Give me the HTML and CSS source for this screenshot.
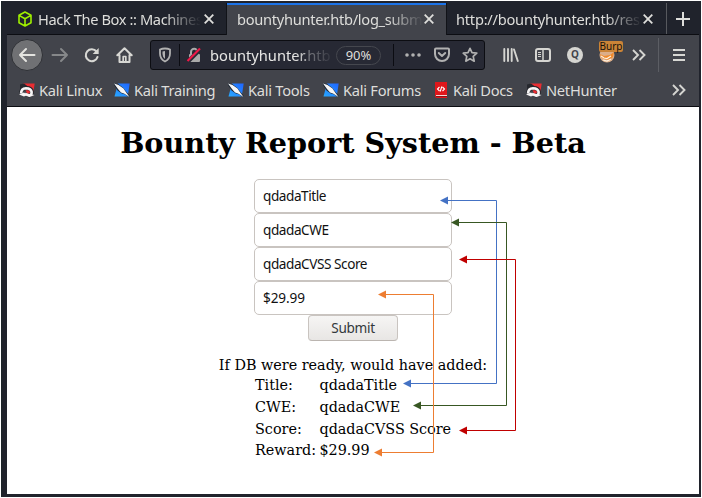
FILE: index.html
```html
<!DOCTYPE html>
<html lang="en">
<head>
<meta charset="utf-8">
<title>Bounty Report System - Beta</title>
<link rel="stylesheet" href="styles.css">
</head>
<body>
<svg class="defs" width="0" height="0">
  <defs>
    <linearGradient id="blue" x1="1" y1="0" x2="0" y2="1"><stop offset="0" stop-color="#1f65ff"/><stop offset="1" stop-color="#28a8ff"/></linearGradient>
    <symbol id="close" viewBox="0 0 12 12"><path d="M1.700 1.700l8.600 8.600M10.300 1.700l-8.600 8.600" fill="none" stroke="#dededb" stroke-width="1.800"/></symbol>
    <symbol id="more" viewBox="0 0 14 12"><path d="M1 1l5 5-5 5M7.500 1l5 5-5 5" fill="none" stroke="#d5d5d1" stroke-width="1.900"/></symbol>
    <symbol id="dragon" viewBox="0 0 16 16"><path d="M4 1.500h11.700l-2 12.500H9z" fill="#ea2d32"/><path d="M1 2.500l4-1 4 3-5 4-3-1z" fill="#26282e"/><path d="M2 10.500Q2.500 6.300 7.500 6q5 0 5.500 4 .2 3-4 3.700" fill="none" stroke="#26282e" stroke-width="4"/><path d="M2.200 11.500Q2 6.500 7 6.200q5 0 5.600 3.600.4 2.700-2.100 3.700L6 12" fill="none" stroke="#f7f5f5" stroke-width="2.600"/><path d="M0 12.500l5-2 3 2.500-3 1.500zM11 12l4.500 1-3.500 1.500H9z" fill="#f7f5f5"/></symbol>
    <symbol id="kali" viewBox="0 0 16 16"><path d="M4 1.500h11.700l-2 13H.5z" fill="url(#blue)"/><path d="M0 2l4 .5 5 4 2 2.500 4.500 5.500-5-3-2.500-.5L4 8z" fill="#1f2935" stroke="#1f2935" stroke-width="1.200"/><path d="M0 1.500l4.500 1.500L9.500 6.500l2 3 4 5.500-5.500-3.500-3-1L4 7z" fill="#f5f6f7"/></symbol>
  </defs>
</svg>
<div class="window">
  <div class="tabs">
    <div class="tab">
      <svg class="htb" width="16" height="16" viewBox="0 0 16 16" fill="none" stroke="#9fef00" stroke-width="1.600" stroke-linejoin="round"><path d="M8 1l6 3.300v7.400L8 15l-6-3.300V4.300zM2.500 4.600L8 7.700l5.500-3.100M8 7.700V15"/></svg>
      <span class="label first">Hack The Box :: Machines</span><svg class="x" width="12" height="12"><use href="#close"/></svg>
    </div>
    <div class="tab active"><span class="label">bountyhunter.htb/log_subm</span><svg class="x" width="12" height="12"><use href="#close"/></svg></div>
    <div class="tab"><span class="label">http://bountyhunter.htb/res</span><svg class="x" width="12" height="12"><use href="#close"/></svg></div>
    <div class="newtab"><svg width="16" height="16" viewBox="0 0 16 16"><path d="M8 1v14M1 8h14" stroke="#dededb" stroke-width="2"/></svg></div>
  </div>
  <div class="toolbar">
    <div class="cell back"><svg width="18" height="16" viewBox="0 0 18 16" fill="none" stroke="#e4e4e0" stroke-width="2" stroke-linecap="round" stroke-linejoin="round"><path d="M16.500 8H2M8 2L2 8l6 6"/></svg></div>
    <div class="cell fwd"><svg width="18" height="16" viewBox="0 0 18 16" fill="none" stroke="#86888a" stroke-width="2" stroke-linecap="round" stroke-linejoin="round"><path d="M1.500 8H16M10 2l6 6-6 6"/></svg></div>
    <div class="cell"><svg width="16" height="16" viewBox="0 0 16 16"><path d="M12.500 4.500A6 6 0 1 0 13.500 10" fill="none" stroke="#d8d8d4" stroke-width="2.100" stroke-linecap="round"/><path d="M14.700 1v6H8.700z" fill="#d8d8d4"/></svg></div>
    <div class="cell"><svg width="17" height="16" viewBox="0 0 17 16" fill="none" stroke="#d8d8d4" stroke-width="2" stroke-linecap="round" stroke-linejoin="round"><path d="M1.300 8.300L8.500 1.300l7.200 7M3.500 8v7h10V8"/><path d="M7.200 14V9.500h2.600V14" stroke-width="1.700"/></svg></div>
    <div class="urlbar">
      <div class="shield"><svg width="14" height="16" viewBox="0 0 14 16"><path d="M7 1.500q3 0 5 1v4Q12 12 7 14.500 2 12 2 6.500v-4q2-1 5-1z" fill="none" stroke="#b1b1b1" stroke-width="1.800"/><path d="M7 4v8Q4.500 10 4.500 7V4.500z" fill="#b1b1b1"/></svg></div>
      <svg class="lock" width="16" height="16" viewBox="0 0 16 16"><path d="M5 8V5a3.200 3.200 0 0 1 6.400 0v3" fill="none" stroke="#aaa" stroke-width="2"/><rect x="3" y="7" width="11" height="8" rx="1" fill="#aaa"/><path d="M2 14.500L14.500 2" stroke="#292a35" stroke-width="4"/><path d="M1.500 14L14 1.500" stroke="#ef1747" stroke-width="2.100"/></svg>
      <span class="url">bountyhunter.<i>htb</i></span>
      <span class="zoom">90%</span>
      <div class="actions">
        <svg width="16" height="4" viewBox="0 0 16 4" fill="#b1b1b1"><circle cx="2" cy="2" r="1.800"/><circle cx="8" cy="2" r="1.800"/><circle cx="14" cy="2" r="1.800"/></svg>
        <svg class="pocket" width="16" height="16" viewBox="0 0 16 16" fill="none" stroke="#b1b1b1" stroke-width="2" stroke-linecap="round" stroke-linejoin="round"><path d="M2 1.500h12q1 0 1 1V7A7 7 0 0 1 1 7V2.500q0-1 1-1zM4.800 6L8 9l3.200-3"/></svg>
        <svg width="16" height="16" viewBox="0 0 16 16"><path d="M8 1.300l2 4.400 4.800.5-3.600 3.200 1 4.800L8 11.800l-4.200 2.400 1-4.800L1.200 6.200 6 5.700z" fill="none" stroke="#b1b1b1" stroke-width="1.700" stroke-linejoin="round"/></svg>
      </div>
    </div>
    <div class="cell lib"><svg width="16" height="16" viewBox="0 0 16 16" stroke="#d5d5d1" stroke-width="1.900" stroke-linecap="round"><path d="M1.300 2v12M5 2v12M8.700 2v12M11 2.500L14.800 14"/></svg></div>
    <div class="cell"><svg width="16" height="16" viewBox="0 0 16 16" fill="none" stroke="#d5d5d1"><rect x="1" y="2" width="14" height="12" rx="2" stroke-width="2"/><path d="M8 2v12" stroke-width="1.500"/><path d="M3 5.500h3M3 7.500h3M3 9.500h3"/></svg></div>
    <div class="cell"><div class="avatar">Q</div></div>
    <div class="cell fox"><svg width="16" height="16" viewBox="0 0 16 16"><circle cx="8" cy="8" r="7.500" fill="#dcae89"/><path d="M1 7l4 2 6-1 4-3-1 5-4 3-5-1-3-2z" fill="#f08a2c"/><path d="M2 9l3 2 3 .5L12 9M4 13l4 1 4-2" stroke="#fff2df" stroke-width="1.200" fill="none"/></svg><span class="badge">Burp</span></div>
    <div class="cell"><svg width="14" height="12"><use href="#more"/></svg></div>
    <div class="menu"><svg width="14" height="12" viewBox="0 0 14 12"><path d="M1 1h12M1 6h12M1 11h12" stroke="#d8d8d4" stroke-width="2"/></svg></div>
  </div>
  <div class="bookmarks">
    <div class="bm b1"><svg width="16" height="16"><use href="#dragon"/></svg><span>Kali Linux</span></div>
    <div class="bm b2"><svg width="16" height="16"><use href="#kali"/></svg><span>Kali Training</span></div>
    <div class="bm b3"><svg width="16" height="16"><use href="#kali"/></svg><span>Kali Tools</span></div>
    <div class="bm b4"><svg width="16" height="16"><use href="#kali"/></svg><span>Kali Forums</span></div>
    <div class="bm b5"><svg width="16" height="16" viewBox="0 0 16 16"><path d="M2 0h12v16H4q-2 0-2-2z" fill="#df171b"/><path d="M3 13.500h11" stroke="#f3dada"/><path d="M3 14.500h11" stroke="#8c1115"/><path d="M6.500 5L4.500 7l2 2M9.500 5l2 2-2 2M8.800 4.500L7.200 9.500" stroke="#fff" stroke-width="1.100" fill="none"/></svg><span>Kali Docs</span></div>
    <div class="bm b6"><svg width="16" height="16"><use href="#dragon"/></svg><span>NetHunter</span></div>
    <svg class="overflow" width="14" height="12"><use href="#more"/></svg>
  </div>
  <main>
    <h1>Bounty Report System - Beta</h1>
    <form>
      <input type="text" value="qdadaTitle"><input type="text" value="qdadaCWE"><input type="text" value="qdadaCVSS Score"><input class="price" type="text" value="$29.99">
      <button type="button">Submit</button>
    </form>
    <p>If DB were ready, would have added:</p>
    <dl><dt>Title:</dt><dd>qdadaTitle</dd><dt>CWE:</dt><dd>qdadaCWE</dd><dt>Score:</dt><dd>qdadaCVSS Score</dd><dt>Reward:</dt><dd>$29.99</dd></dl>
  </main>
</div>
<svg class="arrows" width="702" height="498" viewBox="0 0 702 498">
  <g fill="none" stroke-width="1">
    <path d="M446 200.500h50.500v183H410" stroke="#4472c4"/>
    <path d="M457 222.500h49.500v183H420" stroke="#385723"/>
    <path d="M465 259.500h50.500v171H465" stroke="#c00000"/>
    <path d="M385 294.500h48.500v158H380" stroke="#ed7d31"/>
  </g>
  <path d="M440 200.500l8-4v8zM403 383.500l8-4v8z" fill="#4472c4"/>
  <path d="M451 222.500l8-4v8zM413 405.500l8-4v8z" fill="#385723"/>
  <path d="M459 259.500l8-4v8zM459 430.500l8-4v8z" fill="#c00000"/>
  <path d="M378 294.500l8-4v8zM374 452.500l8-4v8z" fill="#ed7d31"/>
</svg>
</body>
</html>
```
FILE: styles.css
```css
* { box-sizing: border-box; }
body { margin: 0; width: 702px; height: 498px; overflow: hidden; background: #fff; padding: 1px; }
svg { display: block; flex: none; }
.defs { position: absolute; }
.window { width: 700px; height: 496px; background: #20232c; border-left: 1px solid #1b2428; padding: 0 2px 3px 5px; font: 14.67px "Noto Sans", sans-serif; color: #dededb; }
.tabs { display: flex; height: 34px; border-bottom: 1px solid #0c0d12; padding-top: 2px; }
.tab { display: flex; width: 220px; height: 32px; align-items: center; padding: 0 12px 0 10px; white-space: nowrap; }
.tab.active { width: 219px; background: #42444b; border-top: 2px solid #1c73e8; box-shadow: 0 0 0 1px #111318; clip-path: inset(0 -1px 0 -1px); padding-bottom: 2px; }
.htb { margin-right: 5px; }
.label { width: 186px; flex: none; line-height: 24px; letter-spacing: -0.25px; -webkit-mask-image: linear-gradient(to right, #000 150px, transparent 186px); mask-image: linear-gradient(to right, #000 150px, transparent 186px); }
.active .label { letter-spacing: -0.3px; }
.label.first { width: 165px; letter-spacing: -0.4px; -webkit-mask-image: linear-gradient(to right, #000 126px, transparent 163px); mask-image: linear-gradient(to right, #000 126px, transparent 163px); }
.x { margin-left: auto; }
.tab.active .x { margin-right: -1px; }
.newtab { width: 33px; height: 31px; border-left: 1px solid #57595e; display: flex; align-items: center; justify-content: center; }
.toolbar { display: flex; height: 40px; align-items: center; background: #42444b; padding-left: 4px; }
.cell { width: 32px; height: 32px; flex: none; display: flex; align-items: center; justify-content: center; }
.back { border-radius: 50%; background: #707174; border: 1px solid #2f3136; margin-right: 1px; }
.urlbar { display: flex; width: 335px; height: 30px; flex: none; margin-left: 10px; border: 1px solid #0c0d12; border-radius: 3px; background: #272934; align-items: center; margin-right: 10px; }
.shield { width: 29px; height: 22px; border-right: 1px solid #0b0c12; display: flex; align-items: center; justify-content: center; }
.lock { margin-left: 6px; }
.url { width: 120px; margin-left: 8px; color: #e7e7e5; -webkit-mask-image: linear-gradient(to right, #000 84px, transparent 125px); mask-image: linear-gradient(to right, #000 84px, transparent 125px); }
.url i { font-style: normal; color: #a5a6a9; }
.zoom { width: 45px; height: 19px; margin-left: 6px; border: 1px solid #45474e; border-radius: 10px; text-align: center; font-size: 13px; line-height: 17px; flex: none; }
.actions { display: flex; align-items: center; width: 91px; height: 22px; margin-left: 12px; border-left: 1px solid #0b0c12; padding-left: 11px; flex: none; }
.pocket { margin: 0 12px 0 13px; }
.avatar { width: 16px; height: 16px; border-radius: 50%; background: #d5d5d1; color: #42444b; font-weight: 700; font-size: 10px; line-height: 15px; text-align: center; }
.fox { position: relative; }
.badge { position: absolute; left: 8px; top: 2px; width: 24px; height: 11px; border-radius: 2px; background: #cb8437; color: #15110c; font-size: 10px; line-height: 11px; text-align: center; }
.menu { width: 43px; height: 34px; margin-left: 3px; border-left: 1px solid #5c5e64; display: flex; align-items: center; justify-content: center; }
.bookmarks { display: flex; align-items: center; height: 32px; background: #42444b; border-bottom: 1px solid #0c0d12; padding: 0 0 1px 12px; }
.bm { display: flex; align-items: center; gap: 4px; white-space: nowrap; flex: none; letter-spacing: -0.27px; }
.b1, .b3 { width: 95px; }
.b2 { width: 114px; }
.b4 { width: 110px; }
.b5 { width: 93px; }
.b6 { width: 146px; }
main { height: 387px; background: #fff; color: #000; font: 14.36px "DejaVu Serif", serif; display: flex; flex-direction: column; align-items: center; padding-top: 19px; }
h1 { margin: 0 0 19px; font-size: 28.66px; line-height: 34px; white-space: nowrap; }
form { display: flex; flex-direction: column; align-items: center; }
input { width: 198px; height: 34px; border: 1px solid #c9c4c0; border-radius: 5px; padding: 0 8px 1px; font: 13.6px "Noto Sans", sans-serif; letter-spacing: -0.45px; color: #111; outline: 0; background: #fff; }
.price { letter-spacing: -0.1px; }
button { width: 90px; height: 26px; border: 1px solid #c9c4c0; border-bottom-color: #bbb5b0; border-radius: 4px; background: linear-gradient(#f6f5f4, #e8e6e4); font: 13.6px "Noto Sans", sans-serif; letter-spacing: -0.3px; color: #33383b; padding: 0 0 1px; }
p { margin: 16px 0 0; line-height: 17px; }
dl { margin: 1px 0 0; width: 196px; display: grid; grid-template-columns: 64.5px 1fr; grid-template-rows: 22px 22px 21px 22px; line-height: 20px; white-space: nowrap; }
dt, dd { margin: 0; }
dd { letter-spacing: -0.03px; }
.arrows { position: absolute; left: 0; top: 0; pointer-events: none; }
```
